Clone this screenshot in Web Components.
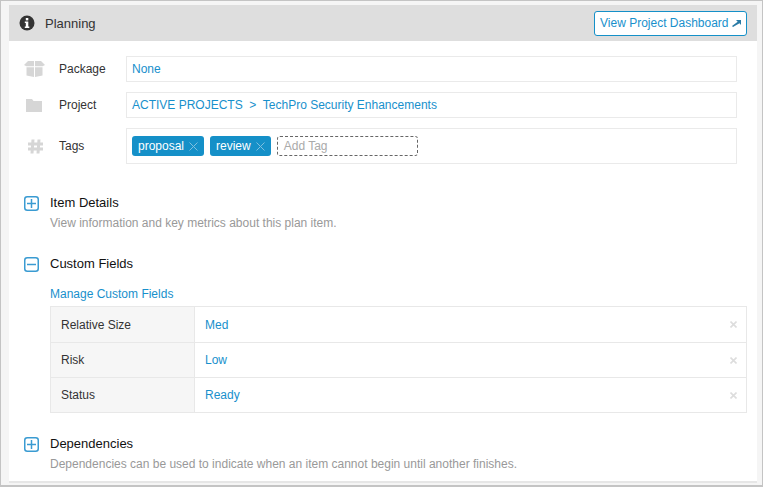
<!DOCTYPE html>
<html>
<head>
<meta charset="utf-8">
<style>
  html, body { margin: 0; height: 100%; }
  body { font-family: "Liberation Sans", Arial, sans-serif; font-size: 12px; color: #333; background: #f5f5f5; overflow: hidden; }
</style>
</head>
<body>
<plan-panel>
  <plan-header slot="header" title-text="Planning" action="View Project Dashboard"></plan-header>

  <info-row label="Package" icon="box"><span>None</span></info-row>
  <info-row label="Project" icon="folder"><span>ACTIVE PROJECTS&nbsp; &gt;&nbsp; TechPro Security Enhancements</span></info-row>
  <info-row label="Tags" icon="hash" tall>
    <tag-chip>proposal</tag-chip>
    <tag-chip>review</tag-chip>
    <add-tag></add-tag>
  </info-row>

  <plan-section heading="Item Details" text="View information and key metrics about this plan item." style="margin-top:30px"></plan-section>
  <plan-section heading="Custom Fields" open style="margin-top:25px">
    <a-link>Manage Custom Fields</a-link>
    <field-table>
      <field-row name="Relative Size" value="Med"></field-row>
      <field-row name="Risk" value="Low"></field-row>
      <field-row name="Status" value="Ready"></field-row>
    </field-table>
  </plan-section>
  <plan-section heading="Dependencies" text="Dependencies can be used to indicate when an item cannot begin until another finishes." style="margin-top:22px"></plan-section>
</plan-panel>

<script>
const icons = {
  box: `<svg width="21" height="16" viewBox="0 0 21 16"><path fill="#d6d6d6" d="M4 0h6v5.200H2.500L0 4zM11 0h6l4 4-2.500 1.200H11zM2.500 6.200H10V16l-7.500-1.500zM11 6.200h7.500v8.300L11 16z"/></svg>`,
  folder: `<svg width="21" height="13" viewBox="0 0 21 13"><path fill="#d6d6d6" d="M2 0h6l1.500 2H18v11H2z"/></svg>`,
  hash: `<svg width="21" height="15" viewBox="0 0 21 15"><path fill="none" stroke="#d6d6d6" stroke-width="3" d="M9 .5 8 14.500M15 .5l-1 14M4 5h15M4 10h15"/></svg>`
}

class PlanPanel extends HTMLElement {
  constructor() {
    super()
    this.attachShadow({ mode: "open" }).innerHTML = `
    <style>
      :host { display: block; box-sizing: border-box; height: 487px; border: 1px solid #c4c4c4; border-bottom-width: 2px; padding: 4px 5px 0 8px; }
      .card { background: #fff; height: 478px; border-bottom: 2px solid #e6e6e6; box-sizing: border-box; overflow: hidden; }
      .body { padding: 15px 20px 0 15px; }
    </style>
    <div class="card">
      <slot name="header"></slot>
      <div class="body"><slot></slot></div>
    </div>`
  }
}

class PlanHeader extends HTMLElement {
  constructor() {
    super()
    this.attachShadow({ mode: "open" }).innerHTML = `
    <style>
      :host { display: flex; align-items: center; padding: 0 0 0 10px; background: #dedede; height: 36px; }
      .title { font-size: 13px; color: #333; margin-left: 10px; flex: 1; }
      .btn { margin: 0 10px 0 0; height: 25px; width: 153px; box-sizing: border-box; border: 1px solid #1590c8; border-radius: 3px; background: #fff; color: #1890cc; display: flex; align-items: center; padding-left: 5px; font-size: 12px; gap: 3px; }
    </style>
    <svg width="16" height="16" viewBox="0 0 16 16"><circle cx="8" cy="8" r="7.500" fill="#333"/><rect x="6.800" y="3" width="2.500" height="2.400" fill="#fff"/><path fill="#fff" d="M5.800 6.500h3.500v5h1v1.500H5.800v-1.500h1V8h-1z"/></svg>
    <span class="title"></span>
    <span class="btn"><span class="txt"></span><svg width="9" height="7" viewBox="0 0 9 7"><path fill="#2a7ba6" d="M4 0h5v5L7.500 3.200 1 7 0 6 5.700 1.700z"/></svg></span>`
    this.shadowRoot.querySelector(".title").textContent = this.getAttribute("title-text")
    this.shadowRoot.querySelector(".txt").textContent = this.getAttribute("action")
  }
}

class InfoRow extends HTMLElement {
  constructor() {
    super()
    const tall = this.hasAttribute("tall")
    this.attachShadow({ mode: "open" }).innerHTML = `
    <style>
      :host { display: flex; align-items: center; margin-bottom: 10px; }
      .ico { width: 21px; display: flex; }
      .lbl { width: 67px; margin-left: 14px; font-size: 12px; color: #333; }
      .val { flex: 1; box-sizing: border-box; height: ${tall ? 36 : 26}px; border: 1px solid #eaeaea; display: flex; align-items: center; gap: 6px; padding-left: 5px; color: #1890cc; font-size: 12px; }
    </style>
    <span class="ico">${icons[this.getAttribute("icon")]}</span>
    <span class="lbl"></span>
    <div class="val"><slot></slot></div>`
    this.shadowRoot.querySelector(".lbl").textContent = this.getAttribute("label")
  }
}

class TagChip extends HTMLElement {
  constructor() {
    super()
    this.attachShadow({ mode: "open" }).innerHTML = `
    <style>
      :host { display: inline-flex; align-items: center; height: 20px; padding: 0 6px; gap: 5px; background: #1590c8; border-radius: 3px; color: #fff; font-size: 12px; }
    </style>
    <slot></slot>
    <svg width="9" height="9" viewBox="0 0 9 9"><path stroke="#7fbfdf" stroke-width="1" d="M.5.5l8 8M8.500.5l-8 8"/></svg>`
  }
}

class AddTag extends HTMLElement {
  constructor() {
    super()
    this.attachShadow({ mode: "open" }).innerHTML = `
    <style>
      :host { display: flex; align-items: center; box-sizing: border-box; width: 141px; height: 20px; border: 1px dashed #666; border-radius: 3px; padding-left: 6px; color: #aaa; font-size: 12px; }
    </style>Add Tag`
  }
}

class PlanSection extends HTMLElement {
  constructor() {
    super()
    const open = this.hasAttribute("open")
    this.attachShadow({ mode: "open" }).innerHTML = `
    <style>
      :host { display: grid; grid-template-columns: 26px 1fr; margin-right: -10px; }
      .tog { grid-row: 1; justify-self: start; align-self: center; display: flex; margin-top: 1px; }
      h3 { margin: 0; font-weight: normal; font-size: 13px; color: #111; line-height: 18px; }
      p { margin: 4px 0 0; font-size: 12px; color: #999; line-height: 14px; grid-column: 2; }
      .rest { grid-column: 2; }
    </style>
    <span class="tog"><svg width="15" height="15" viewBox="0 0 15 15"><rect x=".75" y=".75" width="13.500" height="13.500" rx="2.500" fill="none" stroke="#3a9bd2" stroke-width="1.500"/><path stroke="#3a9bd2" stroke-width="1.500" d="M3 7.500h9${open ? "" : "M7.500 3v9"}"/></svg></span>
    <h3></h3>
    ${this.hasAttribute("text") ? "<p></p>" : ""}
    <div class="rest"><slot></slot></div>`
    this.shadowRoot.querySelector("h3").textContent = this.getAttribute("heading")
    if (this.hasAttribute("text")) this.shadowRoot.querySelector("p").textContent = this.getAttribute("text")
  }
}

class ALink extends HTMLElement {
  constructor() {
    super()
    this.attachShadow({ mode: "open" }).innerHTML = `
    <style>:host { display: block; color: #1890cc; font-size: 12px; line-height: 14px; margin: 14px 0 5px; }</style><slot></slot>`
  }
}

class FieldTable extends HTMLElement {
  constructor() {
    super()
    this.attachShadow({ mode: "open" }).innerHTML = `
    <style>:host { display: block; border: 1px solid #e8e8e8; border-bottom: 0; }</style><slot></slot>`
  }
}

class FieldRow extends HTMLElement {
  constructor() {
    super()
    this.attachShadow({ mode: "open" }).innerHTML = `
    <style>
      :host { display: grid; grid-template-columns: 144px 1fr 16px; height: 35px; box-sizing: border-box; border-bottom: 1px solid #e8e8e8; align-items: center; font-size: 12px; }
      :host(:first-child) { height: 36px; }
      .n { background: #f6f6f6; height: 100%; display: flex; align-items: center; padding-left: 10px; box-sizing: border-box; border-right: 1px solid #e8e8e8; color: #333; }
      .v { color: #1890cc; padding-left: 10px; }
      svg { justify-self: start; }
    </style>
    <span class="n"></span><span class="v"></span>
    <svg width="7" height="7" viewBox="0 0 7 7"><path stroke="#ddd" stroke-width="1.600" d="M.5.5l6 6M6.500.5l-6 6"/></svg>`
    this.shadowRoot.querySelector(".n").textContent = this.getAttribute("name")
    this.shadowRoot.querySelector(".v").textContent = this.getAttribute("value")
  }
}

customElements.define("plan-panel", PlanPanel)
customElements.define("plan-header", PlanHeader)
customElements.define("info-row", InfoRow)
customElements.define("tag-chip", TagChip)
customElements.define("add-tag", AddTag)
customElements.define("plan-section", PlanSection)
customElements.define("a-link", ALink)
customElements.define("field-table", FieldTable)
customElements.define("field-row", FieldRow)
</script>
</body>
</html>
